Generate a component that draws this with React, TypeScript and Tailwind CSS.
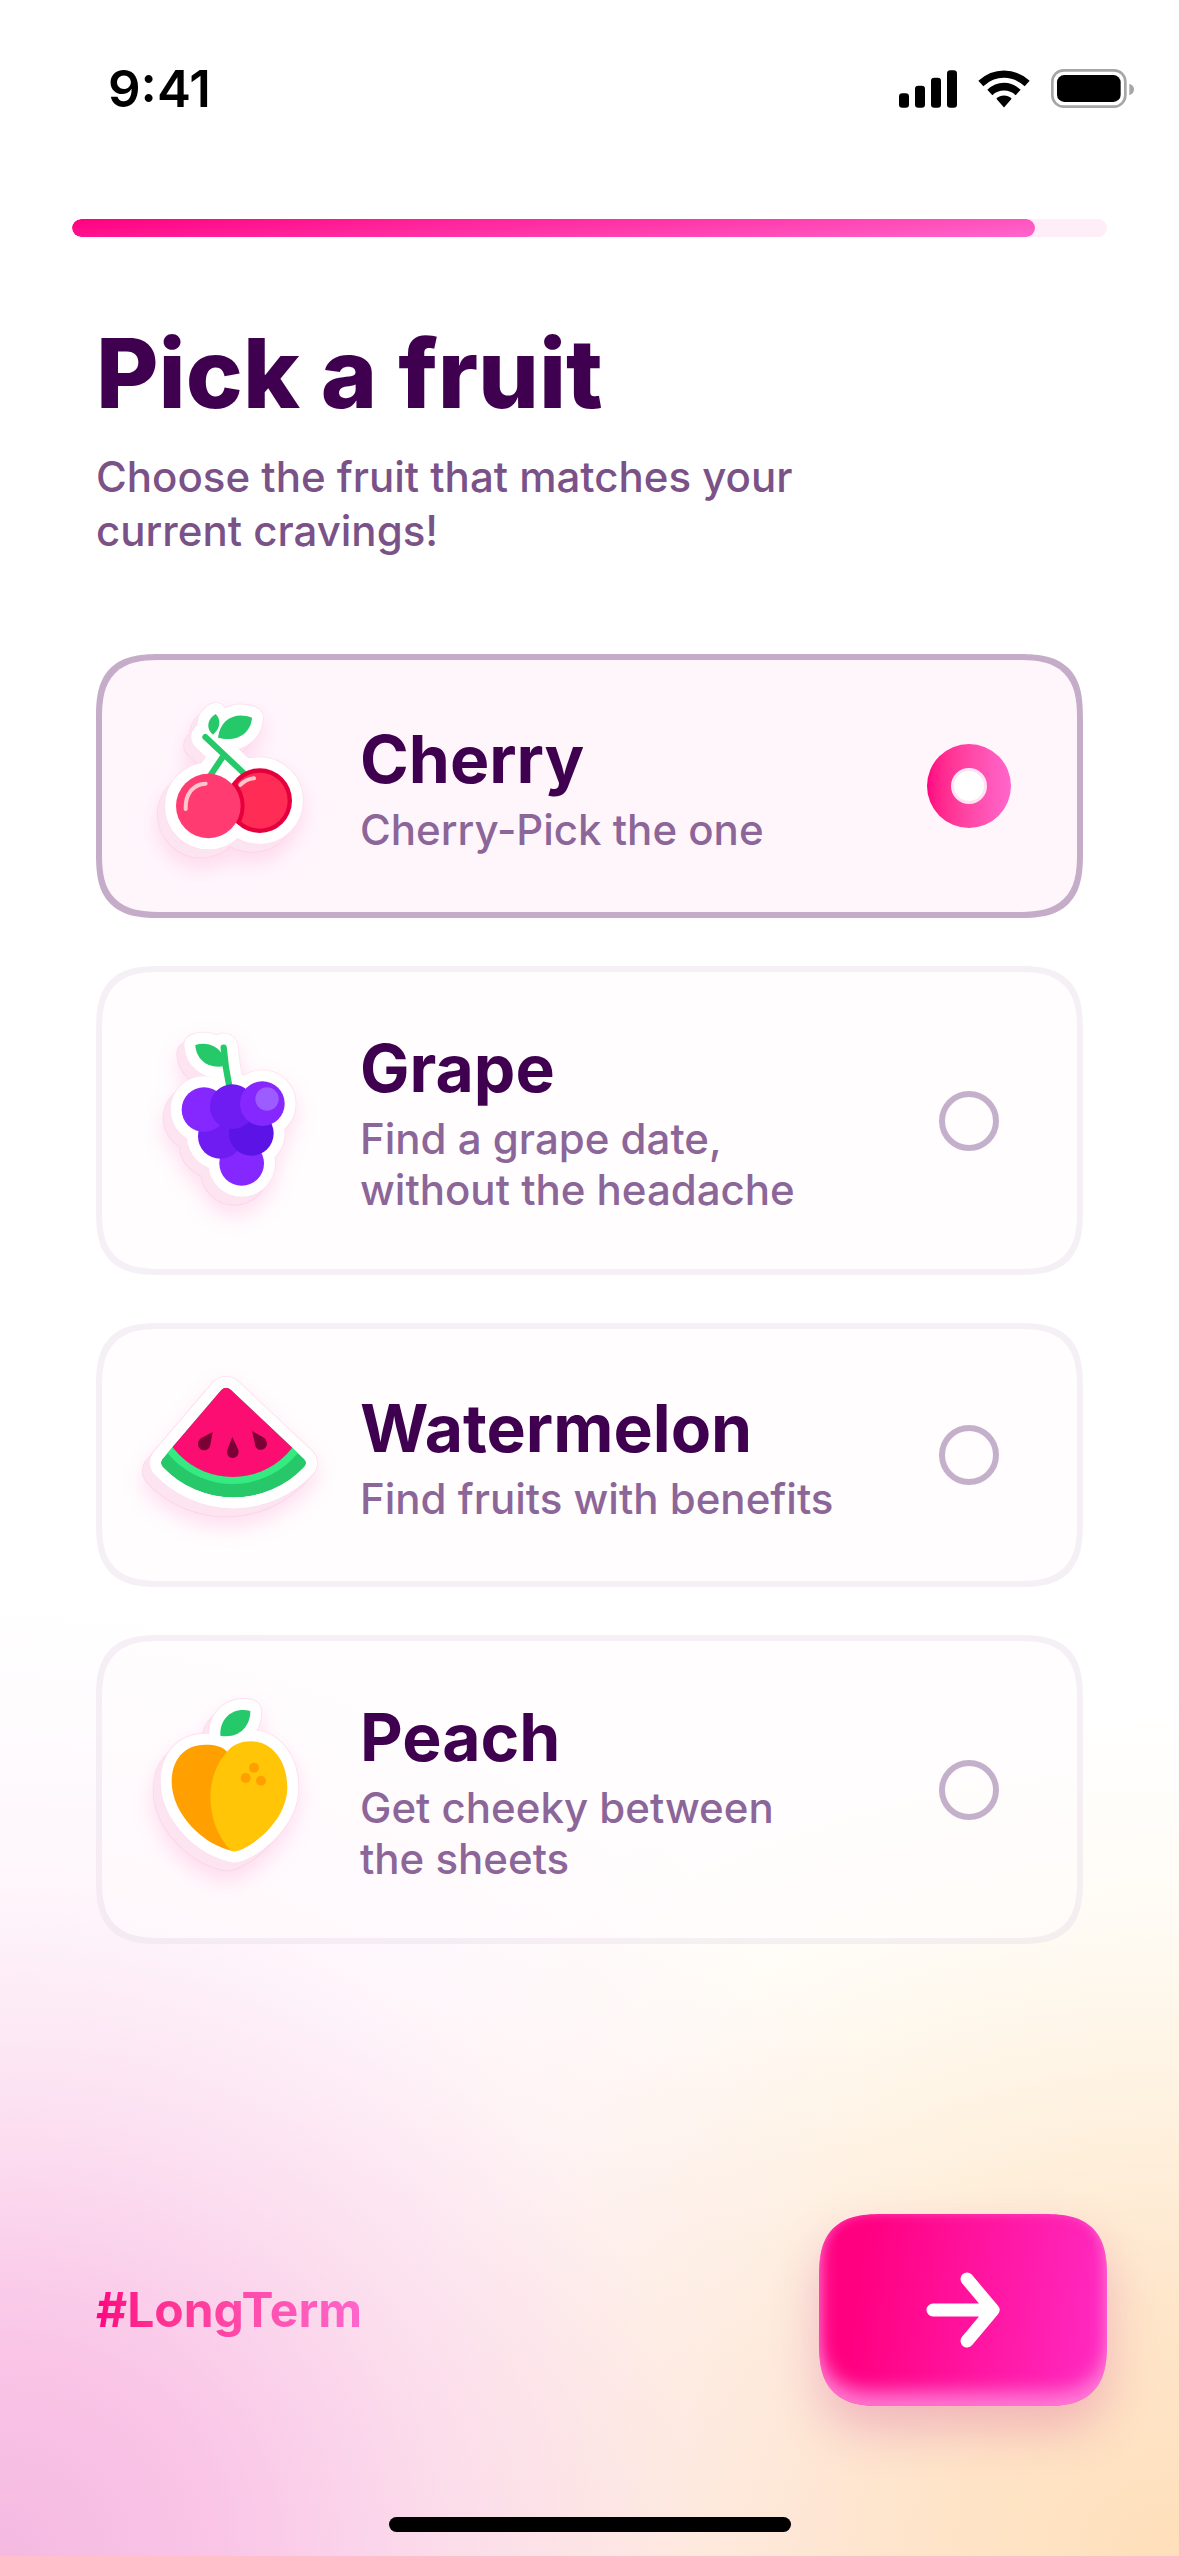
import React, { useState } from 'react';

type OutlinePart = { d: string; width?: number };

// Circle as a path so it can be part of a sticker outline
const circle = (cx: number, cy: number, r: number) =>
  `M${cx - r} ${cy}a${r} ${r} 0 1 0 ${r * 2} 0a${r} ${r} 0 1 0 ${-r * 2} 0Z`;

type StickerProps = {
  viewBox: string;
  outline: OutlinePart[];
  children: React.ReactNode;
};

/**
 * Die-cut sticker: a white border around the drawing,
 * with a pale pink edge below it and a soft shadow
 */
function Sticker({ viewBox, outline, children }: StickerProps) {
  const layer = (color: string, grow: number, x = 0, y = 0) => (
    <g
      key={`${color}-${x}-${grow}`}
      fill={color}
      stroke={color}
      strokeLinecap="round"
      strokeLinejoin="round"
      transform={`translate(${x} ${y})`}
    >
      {outline.map(({ d, width = 0 }) => (
        <path key={d} d={d} strokeWidth={width + grow} />
      ))}
    </g>
  );

  return (
    <svg
      viewBox={viewBox}
      className="size-48 shrink-0 overflow-visible drop-shadow-[0_10px_10px_rgba(255,90,170,0.18)]"
      aria-hidden="true"
    >
      {layer('#fbd5e8', 70, -22, 25)}
      {layer('#fde4f1', 66, -22, 24)}
      {layer('#fde4f1', 66, -16, 18)}
      {layer('#fde4f1', 66, -11, 12)}
      {layer('#fde4f1', 66, -5, 6)}
      {layer('#fde0ee', 71)}
      {layer('#ffffff', 66)}
      {children}
    </svg>
  );
}

const cherrySmallLeaf = 'M377 222C350 238 348 268 369 284C392 264 394 240 377 222Z';
const cherryBigLeaf = 'M384 293C390 238 436 214 486 233C482 282 438 308 384 293Z';
const cherryLeft = circle(355, 498, 97);
const cherryRight = circle(509, 482, 97);

function CherryIcon() {
  return (
    <Sticker
      viewBox="126 150 576 576"
      outline={[
        { d: cherrySmallLeaf },
        { d: cherryBigLeaf },
        { d: 'M346 291L462 400', width: 18 },
        { d: 'M400 348L360 408', width: 18 },
        { d: cherryLeft },
        { d: cherryRight },
      ]}
    >
      <clipPath id="cherry-right">
        <path d={cherryRight} />
      </clipPath>
      <g stroke="#26c96a" strokeWidth="18" strokeLinecap="round">
        <path d="M346 291L462 400" />
        <path d="M400 348L360 408" />
      </g>
      <path d={cherrySmallLeaf} fill="#26c96a" />
      <path d={cherryBigLeaf} fill="#26c96a" />
      <path d={cherryRight} fill="#e5003d" />
      <circle cx="509" cy="482" r="84" fill="#ff2c55" />
      <circle cx="355" cy="498" r="109" fill="#e5003d" clipPath="url(#cherry-right)" />
      <path d={cherryLeft} fill="#ff3b72" />
      <g fill="none" stroke="#ffc6cd" strokeWidth="12" strokeLinecap="round">
        <path d="M287 507C285 462 310 432 347 431" />
        <path d="M451 435Q468 417 492 415" />
      </g>
    </Sticker>
  );
}

const grapeLeaf = 'M316 256C350 244 384 260 396 283L399 320C352 327 318 298 316 256Z';
const grapes = [
  { cx: 455, cy: 611, fill: '#8527ff' },
  { cx: 391, cy: 530, fill: '#6e1cf2' },
  { cx: 484, cy: 521, fill: '#5c14e6' },
  { cx: 342, cy: 450, fill: '#8527ff' },
  { cx: 427, cy: 441, fill: '#6e1cf2' },
  { cx: 517, cy: 432, fill: '#8527ff' },
];

function GrapeIcon() {
  return (
    <Sticker
      viewBox="126 196 576 576"
      outline={[
        { d: grapeLeaf },
        { d: 'M401 264Q406 325 418 380', width: 19 },
        ...grapes.map(({ cx, cy }) => ({ d: circle(cx, cy, 67) })),
      ]}
    >
      <path d={grapeLeaf} fill="#26c96a" />
      <path
        d="M401 264Q406 325 418 380"
        fill="none"
        stroke="#26c96a"
        strokeWidth="19"
        strokeLinecap="round"
      />
      {grapes.map(({ cx, cy, fill }) => (
        <circle key={`${cx}-${cy}`} cx={cx} cy={cy} r="67" fill={fill} />
      ))}
      <circle cx="531" cy="418" r="35" fill="#9d5cff" />
    </Sticker>
  );
}

const melonSlice =
  'M394 240Q408 227 423 240L642 446Q654 458 643 471A293 293 0 0 1 218 471Q208 459 217 447Z';

function WatermelonIcon() {
  return (
    <Sticker viewBox="126 147 576 576" outline={[{ d: melonSlice }]}>
      <clipPath id="melon-slice">
        <path d={melonSlice} />
      </clipPath>
      <g clipPath="url(#melon-slice)">
        <path d={melonSlice} fill="#26c86a" />
        <circle cx="428" cy="270" r="252" fill="#35ea80" />
        <circle cx="428" cy="274" r="227" fill="#fc0d72" />
      </g>
      <g fill="#7a0035">
        <path d="M368 366L361 404C358 422 338 426 328 414C320 402 325 390 334 384Z" />
        <path d="M427 381L444 417C450 432 440 444 428 444C416 444 407 432 413 417Z" />
        <path d="M486 363L523 384C535 396 532 412 520 418C508 423 496 416 495 402Z" />
      </g>
    </Sticker>
  );
}

const peachLeaf = 'M391 315C388 262 430 228 481 241C481 290 444 325 391 315Z';
const peachLeft =
  'M411 363C395 346 375 342 347 342C280 342 245 390 245 452C245 550 340 646 433 662L470 480Z';
const peachRight =
  'M411 363C430 341 455 332 482 332C550 332 592 395 592 470C592 558 510 634 449 659Q434 665 422 660C346 576 340 442 411 363Z';

function PeachIcon() {
  return (
    <Sticker
      viewBox="126 190 576 576"
      outline={[{ d: peachLeaf }, { d: peachLeft }, { d: peachRight }]}
    >
      <path d={peachLeaf} fill="#26c96a" />
      <path d={peachLeft} fill="#ffa000" />
      <path d={peachRight} fill="#ffc506" />
      <g fill="#ffa000">
        <circle cx="492" cy="411" r="15" />
        <circle cx="467" cy="442" r="15" />
        <circle cx="513" cy="450" r="15" />
      </g>
    </Sticker>
  );
}

const fruits = [
  { id: 'cherry', name: 'Cherry', text: 'Cherry-Pick the one', Icon: CherryIcon },
  { id: 'grape', name: 'Grape', text: 'Find a grape date,\nwithout the headache', Icon: GrapeIcon },
  { id: 'watermelon', name: 'Watermelon', text: 'Find fruits with benefits', Icon: WatermelonIcon },
  { id: 'peach', name: 'Peach', text: 'Get cheeky between\nthe sheets', Icon: PeachIcon },
];

function StatusBar() {
  return (
    <header className="flex h-[177px] items-center justify-between pr-[45px] pl-[108px] text-black">
      <time className="text-[51px] leading-[54px] font-semibold">9:41</time>
      <div className="flex items-center gap-[21px]">
        <svg viewBox="39 45 174 113" className="h-[38px] w-[58px]" role="img" aria-label="Signal">
          <rect x="39" y="114" width="30" height="44" rx="10" />
          <rect x="87" y="92" width="30" height="66" rx="10" />
          <rect x="135" y="68" width="30" height="90" rx="10" />
          <rect x="183" y="45" width="30" height="113" rx="10" />
        </svg>
        <svg viewBox="280 46 156 113" className="h-[38px] w-[52px]" role="img" aria-label="Wi-Fi">
          <path d="M281 78Q315 47 358 47Q401 47 435 78L420 94Q392 69 358 69Q324 69 296 94Z" />
          <path d="M308 105Q330 84 358 84Q386 84 408 105L393 121Q378 107 358 107Q338 107 323 121Z" />
          <path d="M335 132Q345 122 358 122Q371 122 381 132L358 158Z" />
        </svg>
        <svg viewBox="498 41 249 117" className="h-[39px] w-[83px]" role="img" aria-label="Battery">
          <rect x="502" y="45" width="219" height="109" rx="34" fill="none" stroke="#a6a6a6" strokeWidth="8" />
          <rect x="516" y="59" width="191" height="81" rx="22" />
          <path d="M733 85Q747 90 747 102Q747 115 733 120Z" fill="#a6a6a6" />
        </svg>
      </div>
    </header>
  );
}

type FruitCardProps = {
  fruit: (typeof fruits)[number];
  checked: boolean;
  onSelect: () => void;
};

function FruitCard({ fruit, checked, onSelect }: FruitCardProps) {
  const { id, name, text, Icon } = fruit;

  return (
    <label
      htmlFor={id}
      className="flex cursor-pointer items-center rounded-[51px] border-[6px] border-[#400050]/5 bg-[#fffcfe]/50 py-[30px] pr-[66px] pl-[30px] has-checked:border-[#c5adc9] has-checked:bg-[#fff6fc] supports-[corner-shape:squircle]:rounded-[66px] supports-[corner-shape:squircle]:[corner-shape:superellipse(1.5)]"
    >
      <Icon />
      <span className="flex flex-1 flex-col gap-1 pt-[26px] pb-6 pl-9">
        <span className="text-[66px] leading-[81px] font-bold text-[#400050]">{name}</span>
        <span className="text-[42px] leading-[51px] font-medium whitespace-pre-line text-[#8c6699]">{text}</span>
      </span>
      <span className="grid size-[84px] place-items-center">
        <input
          id={id}
          type="radio"
          name="fruit"
          checked={checked}
          onChange={onSelect}
          className="grid size-[60px] appearance-none place-items-center rounded-full border-[6px] border-[#c5b0cb] checked:size-[84px] checked:border-0 checked:bg-linear-to-r checked:from-[#ff0080] checked:to-[#ff66cc] checked:before:size-9 checked:before:rounded-full checked:before:border-[3px] checked:before:border-[#fde4f2] checked:before:bg-white checked:before:content-['']"
        />
      </span>
    </label>
  );
}

export default function App() {
  const [selected, setSelected] = useState('cherry');

  return (
    <div className="flex min-h-screen flex-col bg-white bg-[radial-gradient(ellipse_85%_960px_at_0%_100%,#f5b9e1_0%,rgba(249,192,229,0.92)_22%,rgba(249,200,230,0.58)_45%,rgba(251,215,238,0.22)_70%,rgba(255,255,255,0)_100%),radial-gradient(ellipse_90%_860px_at_100%_100%,#ffdfbb_0%,rgba(254,229,200,0.95)_30%,rgba(254,234,206,0.6)_54%,rgba(255,243,220,0.25)_77%,rgba(255,255,255,0)_100%)] font-[Inter,'Liberation_Sans',sans-serif]">
      <StatusBar />

      {/* Progress */}
      <div
        className="mx-[72px] mt-[42px] h-[18px] overflow-hidden rounded-full bg-[#ffeef8]"
        role="progressbar"
        aria-label="Progress"
        aria-valuenow={93}
        aria-valuemin={0}
        aria-valuemax={100}
      >
        <div className="h-full w-[93%] rounded-full bg-linear-[175deg] from-[#ff0080] to-[#ff66cc]" />
      </div>

      <main className="px-24 pt-[82px]">
        <h1 className="text-[96px] leading-[108px] font-extrabold text-[#400050]">Pick a fruit</h1>
        <p className="mt-[23px] max-w-[760px] text-[42px] leading-[54px] font-medium text-[#7b5288]">
          Choose the fruit that matches your current cravings!
        </p>

        <div className="mt-24 flex flex-col gap-12" role="radiogroup" aria-label="Pick a fruit">
          {fruits.map((fruit) => (
            <FruitCard
              key={fruit.id}
              fruit={fruit}
              checked={selected === fruit.id}
              onSelect={() => setSelected(fruit.id)}
            />
          ))}
        </div>
      </main>

      <footer className="mt-auto">
        <div className="flex items-center justify-between pr-[72px] pl-24">
          <span className="bg-linear-to-r from-[#ff0080] to-[#ff66cc] bg-clip-text text-[48px] leading-[60px] font-bold text-transparent">
            #LongTerm
          </span>
          <button
            type="button"
            aria-label="Next"
            className="grid h-48 w-72 cursor-pointer place-items-center rounded-[51px] bg-linear-[97deg] from-[#ff0080] from-15% to-[#ff2cc4] shadow-[inset_0_-15px_18px_rgba(255,130,216,0.85),inset_0_0_12px_rgba(255,110,205,0.5),0_24px_48px_rgba(214,80,150,0.32)] supports-[corner-shape:squircle]:rounded-[66px] supports-[corner-shape:squircle]:[corner-shape:superellipse(1.5)]"
          >
            <svg viewBox="0 0 74 76" className="h-[76px] w-[74px]" fill="none" aria-hidden="true">
              <path
                d="M7 38H67M41 7L67 38L41 69"
                stroke="white"
                strokeWidth="13"
                strokeLinecap="round"
                strokeLinejoin="round"
              />
            </svg>
          </button>
        </div>

        {/* Home indicator */}
        <div className="mx-auto mt-[111px] mb-6 h-[15px] w-[402px] rounded-full bg-black" />
      </footer>
    </div>
  );
}
